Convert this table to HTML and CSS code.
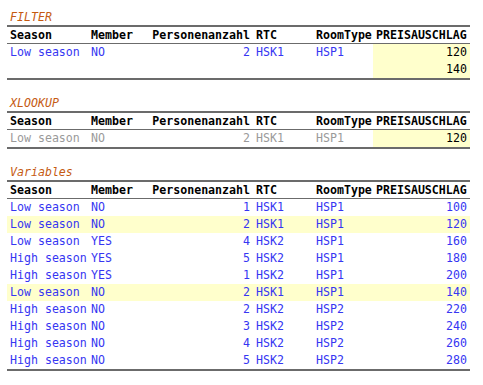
FILE: index.html
```html
<!DOCTYPE html>
<html>
<head>
<meta charset="utf-8">
<link rel="stylesheet" href="styles.css">
</head>
<body>
<div class="page">
  <section class="block">
    <div class="title">FILTER</div>
    <table class="grid">
      <colgroup><col class="c1"><col class="c2"><col class="c3"><col class="c4"><col class="c5"><col class="c6"></colgroup>
      <thead><tr><th>Season</th><th>Member</th><th>Personenanzahl</th><th>RTC</th><th>RoomType</th><th>PREISAUSCHLAG</th></tr></thead>
      <tbody>
        <tr class="blue"><td>Low season</td><td>NO</td><td class="num">2</td><td>HSK1</td><td>HSP1</td><td class="num hl black">120</td></tr>
        <tr class="blue"><td></td><td></td><td></td><td></td><td></td><td class="num hl black">140</td></tr>
      </tbody>
    </table>
  </section>

  <section class="block">
    <div class="title">XLOOKUP</div>
    <table class="grid">
      <colgroup><col class="c1"><col class="c2"><col class="c3"><col class="c4"><col class="c5"><col class="c6"></colgroup>
      <thead><tr><th>Season</th><th>Member</th><th>Personenanzahl</th><th>RTC</th><th>RoomType</th><th>PREISAUSCHLAG</th></tr></thead>
      <tbody>
        <tr class="gray"><td>Low season</td><td>NO</td><td class="num">2</td><td>HSK1</td><td>HSP1</td><td class="num hl black">120</td></tr>
      </tbody>
    </table>
  </section>

  <section class="block">
    <div class="title">Variables</div>
    <table class="grid">
      <colgroup><col class="c1"><col class="c2"><col class="c3"><col class="c4"><col class="c5"><col class="c6"></colgroup>
      <thead><tr><th>Season</th><th>Member</th><th>Personenanzahl</th><th>RTC</th><th>RoomType</th><th>PREISAUSCHLAG</th></tr></thead>
      <tbody>
        <tr class="blue"><td>Low season</td><td>NO</td><td class="num">1</td><td>HSK1</td><td>HSP1</td><td class="num">100</td></tr>
        <tr class="blue hlrow"><td>Low season</td><td>NO</td><td class="num">2</td><td>HSK1</td><td>HSP1</td><td class="num">120</td></tr>
        <tr class="blue"><td>Low season</td><td>YES</td><td class="num">4</td><td>HSK2</td><td>HSP1</td><td class="num">160</td></tr>
        <tr class="blue"><td>High season</td><td>YES</td><td class="num">5</td><td>HSK2</td><td>HSP1</td><td class="num">180</td></tr>
        <tr class="blue"><td>High season</td><td>YES</td><td class="num">1</td><td>HSK2</td><td>HSP1</td><td class="num">200</td></tr>
        <tr class="blue hlrow"><td>Low season</td><td>NO</td><td class="num">2</td><td>HSK1</td><td>HSP1</td><td class="num">140</td></tr>
        <tr class="blue"><td>High season</td><td>NO</td><td class="num">2</td><td>HSK2</td><td>HSP2</td><td class="num">220</td></tr>
        <tr class="blue"><td>High season</td><td>NO</td><td class="num">3</td><td>HSK2</td><td>HSP2</td><td class="num">240</td></tr>
        <tr class="blue"><td>High season</td><td>NO</td><td class="num">4</td><td>HSK2</td><td>HSP2</td><td class="num">260</td></tr>
        <tr class="blue"><td>High season</td><td>NO</td><td class="num">5</td><td>HSK2</td><td>HSP2</td><td class="num">280</td></tr>
      </tbody>
    </table>
  </section>
</div>
</body>
</html>
```
FILE: styles.css
```css
html, body {
  margin: 0;
  padding: 0;
  background: #ffffff;
}
.page {
  padding: 9px 13px 0 7px;
  font-family: "DejaVu Sans Mono", "Liberation Mono", monospace;
  font-size: 11.6px;
}
.block {
  margin-bottom: 15px;
}
.title {
  height: 16px;
  line-height: 16px;
  padding-left: 3px;
  font-style: italic;
  color: #c55a11;
}
.grid {
  width: 463px;
  border-collapse: collapse;
  table-layout: fixed;
  border-top: 2px solid #6b6b6b;
  border-bottom: 2px solid #6b6b6b;
}
.c1 { width: 81px; }
.c2 { width: 61px; }
.c3 { width: 104px; }
.c4 { width: 60px; }
.c5 { width: 60px; }
.c6 { width: 97px; }
.grid th {
  height: 16px;
  padding: 0 3px;
  text-align: left;
  font-weight: bold;
  color: #000;
  border-bottom: 1px solid #6b6b6b;
  white-space: nowrap;
  line-height: 16px;
}
.grid th:nth-child(3) { text-align: right; }
.grid td {
  height: 17px;
  padding: 0 3px;
  line-height: 17px;
  white-space: nowrap;
}
.num { text-align: right; }
.blue td { color: #3636f2; }
.gray td { color: #9a9a9a; }
.grid td.black { color: #000; }
.hl { background: #ffffcc; }
.hlrow td { background: #ffffcc; }
```
